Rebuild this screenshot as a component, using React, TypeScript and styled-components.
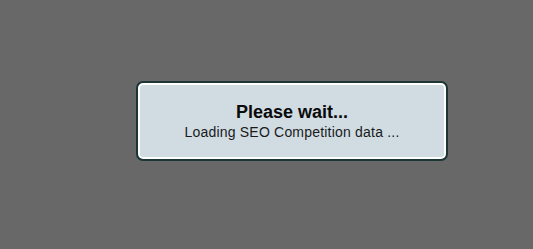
import styled, { createGlobalStyle } from "styled-components";

const GlobalStyle = createGlobalStyle`
  html, body {
    margin: 0;
    padding: 0;
    background-color: #686868;
  }
`;

const Page = styled.div`
  width: 533px;
  height: 249px;
  box-sizing: border-box;
  padding: 81px 0 0 136px;
  background-color: #686868;
  font-family: "Liberation Sans", Arial, sans-serif;
`;

const Dialog = styled.div`
  width: 312px;
  height: 80px;
  box-sizing: border-box;
  border: 2px solid #1c3636;
  border-radius: 7px;
  background-color: #d0dce2;
  box-shadow: inset 0 0 0 2px #ffffff;
  display: flex;
  flex-direction: column;
  align-items: center;
  justify-content: center;
  gap: 2px;
`;

const Title = styled.div`
  font-size: 18px;
  line-height: 20px;
  font-weight: bold;
  color: #0a0a0a;
`;

const Message = styled.div`
  font-size: 14px;
  line-height: 16px;
  letter-spacing: 0.2px;
  color: #1a1a1a;
`;

export default function App() {
  return (
    <>
      <GlobalStyle />
      <Page>
        <Dialog>
          <Title>Please wait...</Title>
          <Message>Loading SEO Competition data ...</Message>
        </Dialog>
      </Page>
    </>
  );
}
